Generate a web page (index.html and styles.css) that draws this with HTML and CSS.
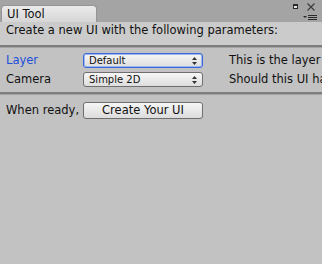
FILE: index.html
```html
<!DOCTYPE html>
<html lang="en">
<head>
    <meta charset="UTF-8">
    <title>UI Tool</title>
    <link rel="stylesheet" href="styles.css">
</head>
<body>
    <div class="window">
        <div class="titlebar">
            <div class="tab">UI Tool</div>
            <svg class="controls" width="25" height="20" viewBox="0 0 25 20">
                <!-- maximize -->
                <rect x="0.5" y="2.5" width="4" height="4" fill="#e6e6e6" stroke="#2a2a2a"/>
                <rect x="0" y="2" width="5" height="2" fill="#2a2a2a"/>
                <!-- close -->
                <path d="M14.5 1.5 L21.5 8.5 M21.5 1.5 L14.5 8.5" stroke="#3a3a3a" stroke-width="1.1" fill="none"/>
                <!-- menu -->
                <path d="M10 14 L14 14 L12 16 Z" fill="#2a2a2a"/>
                <path d="M15 13.5 H24 M15 15.5 H24 M15 17.5 H24" stroke="#2a2a2a" stroke-width="1"/>
            </svg>
        </div>

        <div class="header">Create a new UI with the following parameters:</div>
        <div class="sep"></div>

        <div class="fields">
            <div class="label active">Layer</div>
            <div class="popup focused">
                <span>Default</span>
                <svg class="arrows" width="5" height="8" viewBox="0 0 5 8"><path d="M0 3 L2.5 0 L5 3 Z M0 5 L2.5 8 L5 5 Z" fill="#333"/></svg>
            </div>
            <div class="desc">This is the layer that the UI will be created on</div>

            <div class="label">Camera</div>
            <div class="popup">
                <span>Simple 2D</span>
                <svg class="arrows" width="5" height="8" viewBox="0 0 5 8"><path d="M0 3 L2.5 0 L5 3 Z M0 5 L2.5 8 L5 5 Z" fill="#333"/></svg>
            </div>
            <div class="desc">Should this UI have its own camera?</div>
        </div>
        <div class="sep"></div>

        <div class="footer">
            <div class="label">When ready,</div>
            <button class="btn">Create Your UI</button>
        </div>
    </div>
</body>
</html>
```

FILE: styles.css
```css
* {
    margin: 0;
    padding: 0;
    box-sizing: border-box;
}

body {
    width: 322px;
    height: 264px;
    overflow: hidden;
    background: #c2c2c2;
    font-family: 'DejaVu Sans', sans-serif;
    font-size: 11.5px;
    color: #111;
}

.window {
    width: 322px;
    height: 264px;
    overflow: hidden;
}

.titlebar {
    height: 22px;
    background: #a4a4a4;
    display: flex;
    align-items: flex-start;
}

.tab {
    margin-top: 5px;
    margin-left: 1px;
    width: 96px;
    height: 17px;
    padding-left: 5px;
    line-height: 16px;
    border: 1px solid #959595;
    border-bottom: none;
    border-radius: 4px 4px 0 0;
    background: linear-gradient(#ebebeb, #d6d6d6);
}

.controls {
    margin-left: auto;
    margin-top: 2px;
    margin-right: 4px;
}

.header {
    background: #cbcbcb;
    padding: 1px 6px 7px;
    line-height: 15px;
    white-space: nowrap;
}

.sep {
    height: 3px;
    border-top: 2px solid #7d7d7d;
    border-bottom: 1px solid #a3a3a3;
}

.fields {
    display: grid;
    grid-template-columns: 77px 120px max-content;
    row-gap: 4px;
    align-items: center;
    padding: 5px 0 5px 6px;
    white-space: nowrap;
}

.label {
    width: 77px;
    line-height: 15px;
    white-space: nowrap;
}

.label.active {
    color: #1b4fdc;
}

.popup {
    height: 15px;
    display: flex;
    align-items: center;
    justify-content: space-between;
    padding: 0 5px 0 5px;
    font-size: 10px;
    border: 1px solid #6f6f6f;
    border-radius: 3px;
    background: linear-gradient(#f6f6f6, #dedede);
}

.popup.focused {
    border-color: #3868dc;
    box-shadow: inset 0 0 0 1px #9db6ee;
}

.desc {
    margin-left: 26px;
    line-height: 15px;
}

.footer {
    display: flex;
    align-items: center;
    padding: 7px 6px;
}

.btn {
    width: 120px;
    height: 17px;
    font-family: 'DejaVu Sans', sans-serif;
    font-size: 11.5px;
    color: #111;
    border: 1px solid #6f6f6f;
    border-radius: 3px;
    background: linear-gradient(#f6f6f6, #dcdcdc);
    line-height: 15px;
}
```
